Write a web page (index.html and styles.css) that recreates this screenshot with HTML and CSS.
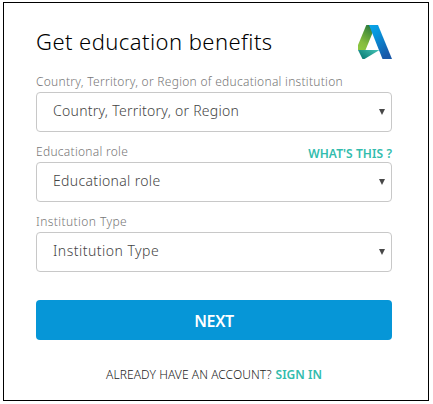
FILE: index.html
```html
<!DOCTYPE html>
<html lang="en">
<head>
<meta charset="utf-8">
<title>Get education benefits</title>
<link rel="stylesheet" href="styles.css">
</head>
<body>
<main class="panel">
  <header class="header">
    <h1 class="title">Get education benefits</h1>
    <svg class="logo" viewBox="0 0 34 34" aria-hidden="true">
      <defs>
        <linearGradient id="green" x1="0.75" y1="0" x2="0.35" y2="1"><stop offset="0" stop-color="#2c7a3c"/><stop offset="0.4" stop-color="#5d9f3b"/><stop offset="0.75" stop-color="#86bc3e"/><stop offset="1" stop-color="#8cc63f"/></linearGradient>
        <linearGradient id="blue" x1="0" y1="0" x2="0.6" y2="1"><stop offset="0" stop-color="#0aa5e8"/><stop offset="0.35" stop-color="#0694dc"/><stop offset="1" stop-color="#1858a8"/></linearGradient>
        <linearGradient id="teal" x1="0" y1="0.6" x2="1" y2="0"><stop offset="0" stop-color="#0b7f77"/><stop offset="1" stop-color="#48c5b8"/></linearGradient>
      </defs>
      <path fill="url(#green)" d="M8.300 0H13l1.500 8L7.500 25H0v-5z"/>
      <path fill="url(#teal)" d="M0 25h21.500L6.500 34h-2z"/>
      <path fill="url(#blue)" d="M11 0h9l14 34h-9.500z"/>
    </svg>
  </header>
  <form class="form">
    <div class="field">
      <div class="label-row"><span class="label">Country, Territory, or Region of educational institution</span></div>
      <div class="select"><span class="value">Country, Territory, or Region</span><svg class="arrow" viewBox="0 0 6 6"><path d="M0 0h6L3 6z"/></svg></div>
    </div>
    <div class="field">
      <div class="label-row"><span class="label">Educational role</span><a class="link help">WHAT'S THIS ?</a></div>
      <div class="select"><span class="value value-role">Educational role</span><svg class="arrow" viewBox="0 0 6 6"><path d="M0 0h6L3 6z"/></svg></div>
    </div>
    <div class="field">
      <div class="label-row"><span class="label label-type">Institution Type</span></div>
      <div class="select"><span class="value value-type">Institution Type</span><svg class="arrow" viewBox="0 0 6 6"><path d="M0 0h6L3 6z"/></svg></div>
    </div>
    <button class="next" type="button">NEXT</button>
  </form>
  <footer class="footer"><span class="question">ALREADY HAVE AN ACCOUNT?</span><a class="link signin">SIGN IN</a></footer>
</main>
</body>
</html>
```
FILE: styles.css
```css
* { box-sizing: border-box; }
body {
  margin: 0;
  background: #fff;
  font-family: "Noto Sans", sans-serif;
  font-stretch: semi-condensed;
}
.panel {
  width: 426px;
  height: 399px;
  margin: 2px 0 0 3px;
  padding: 22px 36px 0 32px;
  border: 1px solid #000;
}
.header {
  display: flex;
  justify-content: space-between;
  height: 50px;
}
.title {
  margin: 1px 0 0;
  font-size: 22px;
  line-height: 30px;
  font-weight: 300;
  letter-spacing: 0.45px;
  white-space: nowrap;
  color: #000;
}
.logo { width: 34px; height: 34px; }
.field { height: 70px; }
.label-row {
  display: flex;
  justify-content: space-between;
  height: 17px;
}
.label {
  font-size: 12px;
  line-height: 13px;
  font-weight: 300;
  letter-spacing: 0.28px;
  white-space: nowrap;
  color: #777;
}
.label-type { letter-spacing: 0.42px; }
.select {
  display: flex;
  justify-content: space-between;
  height: 40px;
  padding: 0 6px 0 16px;
  border: 1px solid #c8c8c8;
  border-radius: 4px;
}
.value {
  font-size: 14px;
  line-height: 36px;
  font-weight: 300;
  letter-spacing: 0.27px;
  white-space: nowrap;
  color: #444;
}
.value-role { letter-spacing: 0.33px; }
.value-type { letter-spacing: 0.48px; }
.arrow { width: 6px; height: 6px; margin-top: 16px; fill: #484848; }
.link { color: #32bcad; font-size: 12px; font-weight: 600; white-space: nowrap; }
.help { line-height: 17px; letter-spacing: 0.07px; }
.next {
  display: block;
  width: 100%;
  height: 40px;
  margin-top: 15px;
  padding: 2px 0 0;
  border: 0;
  border-radius: 4px;
  background: #0696d7;
  color: #fff;
  font: 600 16px/38px "Noto Sans", sans-serif;
  letter-spacing: -0.3px;
}
.footer {
  display: flex;
  justify-content: center;
  gap: 4px;
  margin-top: 26px;
  font-size: 12px;
  line-height: 17px;
  white-space: nowrap;
}
.question { font-weight: 300; color: #222; letter-spacing: 0.07px; }
```
